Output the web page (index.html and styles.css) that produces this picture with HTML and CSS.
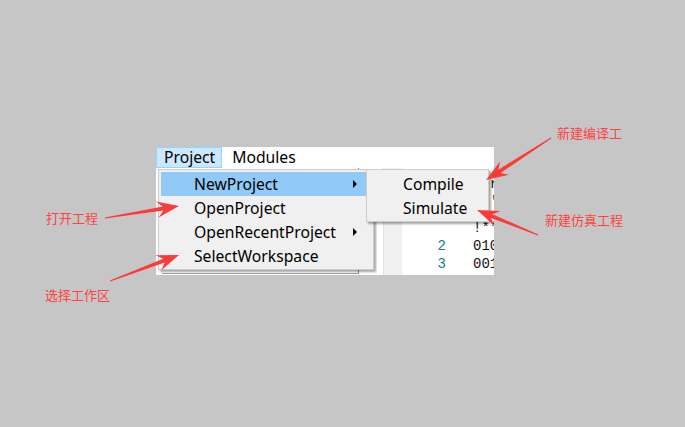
FILE: index.html
```html
<!DOCTYPE html>
<html>
<head>
<meta charset="utf-8">
<link rel="stylesheet" href="styles.css">
</head>
<body>
<div class="window">
  <div class="menubar">
    <div class="mb-item active">Project</div>
    <div class="mb-item">Modules</div>
  </div>
  <div class="content">
    <div class="left-panel"><div class="inner-box"></div></div>
    <div class="gutter"></div>
    <div class="editor">
      <div class="line"><span class="ln"></span><span class="code">Per</span></div>
      <div class="line"><span class="ln"></span><span class="code">  '</span></div>
      <div class="line gap"><span class="ln"></span><span class="code">!**</span></div>
      <div class="line"><span class="ln">2</span><span class="code">010</span></div>
      <div class="line"><span class="ln">3</span><span class="code">001</span></div>
    </div>
  </div>

  <div class="dropdown">
    <div class="mi hl">NewProject<span class="tri"></span></div>
    <div class="mi">OpenProject</div>
    <div class="mi">OpenRecentProject<span class="tri"></span></div>
    <div class="mi">SelectWorkspace</div>
  </div>
  <div class="submenu">
    <div class="mi sub">Compile</div>
    <div class="mi sub">Simulate</div>
  </div>
</div>

<div class="label l1">打开工程</div>
<div class="label l2">选择工作区</div>
<div class="label l3">新建编译工</div>
<div class="label l4">新建仿真工程</div>

<svg class="arrows" width="685" height="427" viewBox="0 0 685 427">
  <polygon points="105.08,218.49 163.53,210.53 158.57,217.42 179,206 156.01,201.62 162.89,206.59 104.92,217.51"/>
  <polygon points="110.18,281.47 164.74,262.51 161.23,270.25 179,255 155.59,255.27 163.32,258.77 109.82,280.53"/>
  <polygon points="550.73,137.58 498.35,169.63 500.14,161.34 486,180 508.82,174.78 500.53,172.99 551.27,138.42"/>
  <polygon points="538.19,234.54 492.56,214.22 500.38,210.94 477,210 494.32,225.74 491.04,217.92 537.81,235.46"/>
</svg>
</body>
</html>
```
FILE: styles.css
```css
html, body {
  margin: 0;
  padding: 0;
}
body {
  width: 685px;
  height: 427px;
  overflow: hidden;
  background: #c6c6c6;
  position: relative;
  padding: 147px 0 0 156px;
  box-sizing: border-box;
  font-family: "Noto Sans", "Open Sans", sans-serif;
}
.window {
  position: relative;
  width: 338px;
  height: 128px;
  background: #ffffff;
  display: flex;
  flex-direction: column;
}
.menubar {
  height: 21px;
  display: flex;
  font-size: 15.7px;
  color: #000;
}
.mb-item {
  line-height: 19px;
  padding: 0 8px 0 9px;
  border: 1px solid transparent;
}
.mb-item.active {
  background: #cce8ff;
  border-color: #99d1ff;
  padding: 0 6px 0 7px;
}
.content {
  flex: 1;
  display: flex;
  min-height: 0;
}
.left-panel {
  width: 227px;
  flex: none;
  padding: 0 24px 1px 6px;
  box-sizing: border-box;
  display: flex;
  flex-direction: column;
  justify-content: flex-end;
}
.inner-box {
  height: 100%;
  border-right: 1px solid #8a8a8a;
  border-bottom: 1px solid #a0a0a0;
}
.gutter {
  width: 18px;
  flex: none;
  background: #f0f0f0;
  border-left: 1px solid #e3e3e3;
}
.editor {
  flex: 1;
  min-width: 0;
  padding-top: 7px;
  font-family: "Liberation Mono", "DejaVu Sans Mono", monospace;
  font-size: 14px;
  overflow: hidden;
}
.line {
  display: flex;
  height: 18px;
  line-height: 18px;
}
.line.gap {
  margin-top: 8px;
}
.ln {
  width: 44px;
  text-align: right;
  color: #237893;
  flex: none;
}
.code {
  flex: none;
  white-space: pre;
  margin-left: 27px;
  color: #111;
}
.dropdown {
  position: absolute;
  left: 2px;
  top: 22px;
  width: 216px;
  height: 101px;
  box-sizing: border-box;
  background: #f0f0f0;
  border: 1px solid #cccccc;
  padding: 2px;
  box-shadow: 2px 2px 2px rgba(0, 0, 0, 0.35);
}
.submenu {
  position: absolute;
  left: 210px;
  top: 22px;
  width: 123px;
  height: 53px;
  box-sizing: border-box;
  background: #f0f0f0;
  border: 1px solid #cccccc;
  padding: 2px;
  box-shadow: 2px 2px 2px rgba(0, 0, 0, 0.35);
}
.mi {
  position: relative;
  height: 24px;
  line-height: 24px;
  padding-left: 33px;
  font-size: 15.7px;
  color: #000;
}
.mi.sub {
  padding-left: 34px;
}
.mi.hl {
  background: #91c9f7;
}
.tri {
  position: absolute;
  right: 14px;
  top: 8px;
  width: 0;
  height: 0;
  border-top: 4px solid transparent;
  border-bottom: 4px solid transparent;
  border-left: 4px solid #000;
}
.label {
  position: absolute;
  font-family: "Noto Sans CJK SC", sans-serif;
  font-size: 13px;
  line-height: 16px;
  color: #ff4141;
}
.l1 { left: 46px; top: 210px; }
.l2 { left: 45px; top: 287px; }
.l3 { left: 557px; top: 125px; }
.l4 { left: 545px; top: 212px; }
.arrows {
  position: absolute;
  left: 0;
  top: 0;
}
.arrows polygon {
  fill: #fb3a3a;
}
```
